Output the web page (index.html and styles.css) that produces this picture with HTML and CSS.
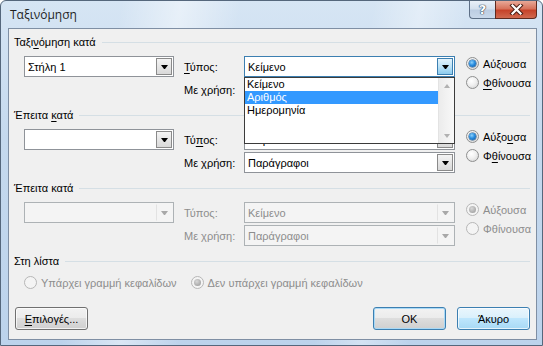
FILE: index.html
```html
<!DOCTYPE html>
<html lang="el">
<head>
  <meta charset="UTF-8" />
  <title>Ταξινόμηση</title>
  <link rel="stylesheet" href="styles.css">
</head>
<body>
  <div class="window">
    <div class="titlebar">
      <span class="title">Ταξινόμηση</span>
      <div class="caption">
        <div class="cap help"><span>?</span></div>
        <div class="cap close">
          <svg width="17" height="11" viewBox="0 0 17 11">
            <path d="M4.5 1.5 L12.5 9.5 M12.5 1.5 L4.5 9.5" stroke="#4a1f16" stroke-width="4.2" stroke-linecap="square" fill="none"/>
            <path d="M4.5 1.5 L12.5 9.5 M12.5 1.5 L4.5 9.5" stroke="#fff" stroke-width="2.2" stroke-linecap="square" fill="none"/>
          </svg>
        </div>
      </div>
    </div>

    <div class="client">
      <!-- first sort key -->
      <section class="group">
        <div class="group-head"><span>Ταξι<u>ν</u>όμηση κατά</span></div>
        <div class="group-body">
          <div class="combo key"><span class="value">Στήλη 1</span><span class="arrow"></span></div>
          <span class="lbl type"><span><u>Τ</u>ύπος:</span></span>
          <div class="combo focused typebox">
            <span class="value">Κείμενο</span><span class="arrow"></span>
            <div class="dropdown">
              <ul class="items">
                <li>Κείμενο</li>
                <li class="selected">Αριθμός</li>
                <li>Ημερομηνία</li>
              </ul>
              <div class="scrollbar"><span class="sb-up"></span><span class="sb-down"></span></div>
            </div>
          </div>
          <div class="radios">
            <label class="radio checked"><span class="dot"></span><span>Αύξουσα</span></label>
            <label class="radio"><span class="dot"></span><span><u>Φ</u>θίνουσα</span></label>
          </div>
          <span class="lbl using"><span>Με χρήση:</span></span>
          <div class="combo usingbox"><span class="value"></span><span class="arrow"></span></div>
        </div>
      </section>

      <!-- second sort key -->
      <section class="group">
        <div class="group-head"><span>Έπειτα <u>κ</u>ατά</span></div>
        <div class="group-body">
          <div class="combo key"><span class="value"></span><span class="arrow"></span></div>
          <span class="lbl type"><span>Τύ<u>π</u>ος:</span></span>
          <div class="combo typebox"><span class="value">Κείμενο</span><span class="arrow"></span></div>
          <div class="radios">
            <label class="radio checked"><span class="dot"></span><span>Αύξο<u>υ</u>σα</span></label>
            <label class="radio"><span class="dot"></span><span>Φ<u>θ</u>ίνουσα</span></label>
          </div>
          <span class="lbl using"><span>Με χρήση:</span></span>
          <div class="combo usingbox"><span class="value">Παράγραφοι</span><span class="arrow"></span></div>
        </div>
      </section>

      <!-- third sort key, disabled -->
      <section class="group disabled">
        <div class="group-head"><span>Έπειτα κατά</span></div>
        <div class="group-body">
          <div class="combo key"><span class="value"></span><span class="arrow"></span></div>
          <span class="lbl type"><span>Τύπος:</span></span>
          <div class="combo typebox"><span class="value">Κείμενο</span><span class="arrow"></span></div>
          <div class="radios">
            <label class="radio checked"><span class="dot"></span><span>Αύξουσα</span></label>
            <label class="radio"><span class="dot"></span><span>Φθίνουσα</span></label>
          </div>
          <span class="lbl using"><span>Με χρήση:</span></span>
          <div class="combo usingbox"><span class="value">Παράγραφοι</span><span class="arrow"></span></div>
        </div>
      </section>

      <section class="group list">
        <div class="group-head"><span>Στη λίστα</span></div>
        <div class="list-body disabled">
          <label class="radio"><span class="dot"></span><span>Υπάρχει γραμμή κεφαλίδων</span></label>
          <label class="radio checked"><span class="dot"></span><span>Δεν υπάρχει γραμμή κεφαλίδων</span></label>
        </div>
      </section>

      <div class="buttons">
        <button class="btn"><u>Ε</u>πιλογές...</button>
        <span class="spacer"></span>
        <button class="btn default">ΟΚ</button>
        <button class="btn hover">Άκυρο</button>
      </div>
    </div>
  </div>
</body>
</html>
```

FILE: styles.css
```css
* {
  box-sizing: border-box;
}
body {
  margin: 0;
  background: #fff;
  font-family: "Liberation Sans", Arial, sans-serif;
  font-size: 11px;
  color: #000;
}
u {
  text-decoration-thickness: 1px;
  text-underline-offset: 2px;
}

/* window frame */
.window {
  width: 543px;
  height: 346px;
  display: flex;
  flex-direction: column;
  border: 1px solid #55677c;
  border-radius: 6px 6px 0 0;
  overflow: hidden;
  background:
    linear-gradient(100deg, rgba(255,255,255,0) 20%, rgba(255,255,255,0.45) 30%, rgba(255,255,255,0) 40%,
      rgba(255,255,255,0) 62%, rgba(255,255,255,0.35) 70%, rgba(255,255,255,0) 78%),
    linear-gradient(180deg, #d6e5f4 0%, #c5d9ee 40%, #bcd3ec 100%);
}
.titlebar {
  height: 28px;
  display: flex;
  justify-content: space-between;
  align-items: flex-start;
}
.title {
  font-family: "Open Sans", "Noto Sans", sans-serif;
  font-size: 12px;
  line-height: 16px;
  margin: 6px 0 0 9px;
  color: #1e1e1e;
}
.caption {
  display: flex;
  margin-right: 5px;
}
.cap {
  height: 18px;
  display: flex;
  align-items: center;
  justify-content: center;
  border: 1px solid #5d6f86;
  border-top: none;
}
.help {
  width: 26px;
  border-right: none;
  border-radius: 0 0 0 4px;
  background: linear-gradient(180deg, #e9f0f8 0%, #d3dfed 48%, #bccde2 52%, #c9d8ea 100%);
}
.help span {
  font: bold 13px "DejaVu Sans", sans-serif;
  color: #fff;
  text-shadow: 0 0 1px #2c3e55, 0 0 1px #2c3e55, 0 0 1px #2c3e55;
}
.close {
  width: 42px;
  border-color: #5e2a1f;
  border-radius: 0 0 4px 0;
  background: linear-gradient(180deg, #e8a998 0%, #d7735c 45%, #c6432a 55%, #d0694f 100%);
}

/* client area */
.client {
  flex: 1;
  margin: 0 5px 5px 7px;
  border: 1px solid #7f8fa4;
  background: #f0f0f0;
  padding: 6px 0 9px 0;
  display: flex;
  flex-direction: column;
}
.group {
  margin-bottom: 8px;
}
.group-head {
  height: 14px;
  display: flex;
  align-items: center;
  gap: 6px;
  padding: 0 6px 0 5px;
}
.group-head::after {
  content: "";
  flex: 1;
  border-top: 1px solid #d5dfe5;
}
.group-body {
  margin-top: 7px;
  padding-left: 15px;
  display: grid;
  grid-template-columns: 150px 70px 211px 1fr;
  grid-template-rows: 21px 21px;
  row-gap: 2px;
  grid-template-areas:
    "key type typebox radios"
    ".   using usingbox radios";
}
.key { grid-area: key; }
.type { grid-area: type; }
.typebox { grid-area: typebox; }
.using { grid-area: using; }
.usingbox { grid-area: usingbox; }
.radios { grid-area: radios; }

.lbl {
  display: flex;
  align-items: center;
  padding-left: 10px;
}

/* combo boxes */
.combo {
  position: relative;
  display: flex;
  align-items: center;
  background: #fff;
  border: 1px solid #8f9399;
}
.combo .value {
  flex: 1;
  padding-left: 3px;
  white-space: nowrap;
}
.combo .arrow {
  width: 16px;
  height: 17px;
  margin: 1px;
  border: 1px solid #8a8a8a;
  background: linear-gradient(180deg, #f4f4f4 0%, #e6e6e6 50%, #d9d9d9 100%);
  display: flex;
  align-items: center;
  justify-content: center;
}
.combo .arrow::after {
  content: "";
  width: 1px;
  border-left: 3px solid transparent;
  border-right: 3px solid transparent;
  border-top: 4px solid #000;
}
.combo.focused {
  border-color: #3c7fb1;
}
.combo.focused .arrow {
  border-color: #3c7fb1;
  background: linear-gradient(180deg, #e3f3fc 0%, #bde3f7 50%, #8ccbee 100%);
}

/* open list of the first type box */
.dropdown {
  position: absolute;
  top: 20px;
  left: -1px;
  right: -1px;
  height: 67px;
  z-index: 5;
  display: flex;
  background: #fff;
  border: 1px solid #3b3b3b;
}
.items {
  flex: 1;
  list-style: none;
  margin: 0;
  padding: 0;
}
.items li {
  height: 13px;
  line-height: 13px;
  padding-left: 2px;
}
.items li.selected {
  background: #3399ff;
  color: #fff;
}
.scrollbar {
  width: 16px;
  border-left: 1px solid #e3e3e3;
  background: linear-gradient(90deg, #ececec, #f8f8f8);
  display: flex;
  flex-direction: column;
  justify-content: space-between;
  align-items: center;
  padding: 6px 0 5px;
}
.sb-up, .sb-down {
  width: 1px;
  border-left: 3px solid transparent;
  border-right: 3px solid transparent;
}
.sb-up { border-bottom: 4px solid #b1b1b1; }
.sb-down { border-top: 4px solid #b1b1b1; }

/* radio buttons */
.radios {
  display: flex;
  flex-direction: column;
  gap: 4px;
  padding-left: 11px;
}
.radio {
  height: 15px;
  display: flex;
  align-items: center;
  gap: 4px;
  white-space: nowrap;
}
.dot {
  width: 13px;
  height: 13px;
  border-radius: 50%;
  border: 1px solid #8e8f8f;
  background: radial-gradient(circle at 40% 35%, #ffffff 0%, #f0f0f0 45%, #cfcfcf 100%);
  display: flex;
  align-items: center;
  justify-content: center;
  flex: none;
}
.radio.checked .dot::after {
  content: "";
  width: 7px;
  height: 7px;
  border-radius: 50%;
  background: radial-gradient(circle at 40% 35%, #8fd2fb 0%, #2a8ee0 45%, #0d4f96 100%);
  box-shadow: 0 0 0 0.5px #1d4f7d;
}

/* disabled parts */
.disabled .group-head,
.disabled .lbl,
.disabled .radio,
.disabled .combo .value {
  color: #8d8d8d;
}
.group.disabled .group-head {
  color: #000;
}
.disabled .combo {
  background: #f4f4f4;
  border-color: #adb2b5;
}
.disabled .combo .arrow {
  border-color: transparent;
  border-left-color: #e2e2e2;
  background: #f4f4f4;
}
.disabled .combo .arrow::after {
  border-top-color: #a8a8a8;
}
.disabled .dot {
  border-color: #b7b7b7;
  background: #f4f4f4;
}
.disabled .radio.checked .dot::after {
  background: radial-gradient(circle at 40% 35%, #d8d8d8 0%, #a9a9a9 70%, #8f8f8f 100%);
  box-shadow: none;
}

/* header row list */
.list-body {
  margin-top: 7px;
  padding-left: 15px;
  display: flex;
  gap: 14px;
}

/* bottom buttons */
.buttons {
  margin-top: 9px;
  display: flex;
  gap: 11px;
  padding: 0 6px;
}
.spacer {
  flex: 1;
}
.btn {
  width: 73px;
  height: 23px;
  font: inherit;
  color: #000;
  padding: 0;
  border: 1px solid #707070;
  border-radius: 3px;
  background: linear-gradient(180deg, #f2f2f2 0%, #ebebeb 49%, #dddddd 50%, #cfcfcf 100%);
  box-shadow: inset 0 0 0 1px rgba(255,255,255,0.7);
}
.btn.default {
  border-color: #3c7fb1;
  box-shadow: inset 0 0 0 1px #a9d9f6;
}
.btn.hover {
  border-color: #3c7fb1;
  background: linear-gradient(180deg, #eaf6fd 0%, #d9f0fc 49%, #bee6fd 50%, #a7d9f5 100%);
}
```
